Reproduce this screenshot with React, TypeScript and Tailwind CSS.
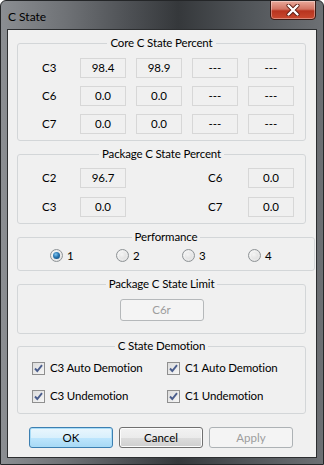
import React from "react";

const Field = ({ v }: { v: string }) => (
  <div className="w-[46px] h-[20px] border border-[#d7d7d7] bg-[#f0f0f0] flex items-center justify-center text-[11.5px] leading-none text-black">
    {v}
  </div>
);

const Label = ({ t }: { t: string }) => (
  <div className="h-[20px] flex items-center text-[11.5px] leading-none text-black">{t}</div>
);

const Group = ({
  title,
  className,
  children,
}: {
  title: string;
  className?: string;
  children: React.ReactNode;
}) => (
  <fieldset className={"w-[289px] border border-[#d3d6d8] rounded-[3px] " + (className ?? "")}>
    <legend className="mx-auto px-[3px] text-[11.5px] tracking-[-0.15px] leading-[16px] text-black">{title}</legend>
    {children}
  </fieldset>
);

const Radio = ({ checked, label }: { checked?: boolean; label: string }) => (
  <div className="w-[66px] flex items-center gap-[4px]">
    <div className="w-[13px] h-[13px] rounded-full border border-[#8e9396] bg-[radial-gradient(circle_at_40%_40%,#ffffff,#d8d8d8)] flex items-center justify-center">
      {checked ? (
        <div className="w-[7px] h-[7px] rounded-full bg-[radial-gradient(circle_at_40%_35%,#7fc4ee_0%,#2a77b2_45%,#0b3f6e_100%)]" />
      ) : (
        <div className="w-[7px] h-[7px] rounded-full bg-[radial-gradient(circle_at_40%_35%,#f4f4f4,#dcdcdc)]" />
      )}
    </div>
    <span className="text-[11.5px] leading-none text-black">{label}</span>
  </div>
);

const Check = ({ label }: { label: string }) => (
  <div className="h-[16px] flex items-center gap-[5px]">
    <div className="w-[13px] h-[13px] border border-[#8f8f8f] bg-[linear-gradient(135deg,#dcdcdc,#f6f6f6)] flex items-center justify-center">
      <svg width="11" height="11" viewBox="0 0 11 11">
        <path d="M2 5.5 L4.3 8 L9 2.2" fill="none" stroke="#4a5d8c" strokeWidth="1.9" />
      </svg>
    </div>
    <span className="text-[11.5px] tracking-[-0.15px] leading-none text-black">{label}</span>
  </div>
);

export default function App() {
  return (
    <div className="w-[324px] h-[465px] font-['Lato','Open_Sans',sans-serif] flex flex-col border border-[#242628] rounded-t-[6px] bg-[linear-gradient(90deg,#8b8e92_0%,#6f7276_20%,#4d5054_40%,#35383b_55%,#4f5357_75%,#6d7074_100%)] overflow-hidden">
      <div className="h-[29px] flex items-start pl-[7px] pr-[7px] shrink-0">
        <div className="mt-[8px] text-[12px] leading-[16px] text-black">C State</div>
        <div className="ml-auto w-[46px] h-[20px] -mt-px rounded-b-[4px] border border-[#3b1a14] bg-[linear-gradient(180deg,#e9a99b_0%,#d27463_45%,#b8341f_55%,#c9492f_100%)] flex items-center justify-center shadow-[inset_0_0_0_1px_rgba(255,255,255,0.35)]">
          <svg width="14" height="12" viewBox="0 0 14 12">
            <path d="M2.5 1.5 L11.5 10.5 M11.5 1.5 L2.5 10.5" stroke="#5a1a10" strokeWidth="4" strokeLinecap="round" />
            <path d="M2.5 1.5 L11.5 10.5 M11.5 1.5 L2.5 10.5" stroke="#ffffff" strokeWidth="2.4" strokeLinecap="round" />
          </svg>
        </div>
      </div>
      <div className="mx-[7px] w-[308px] h-[427px] bg-[#f0f0f0] shadow-[0_0_0_1px_#2c2e30] flex flex-col pl-[9px] pt-[5px] shrink-0">
        <Group title="Core C State Percent" className="pt-[7px] pb-[6px]">
          <div className="grid grid-cols-[28px_repeat(4,46px)] gap-x-[10px] gap-y-[8px] pl-[24px]">
            <Label t="C3" />
            <Field v="98.4" />
            <Field v="98.9" />
            <Field v="---" />
            <Field v="---" />
            <Label t="C6" />
            <Field v="0.0" />
            <Field v="0.0" />
            <Field v="---" />
            <Field v="---" />
            <Label t="C7" />
            <Field v="0.0" />
            <Field v="0.0" />
            <Field v="---" />
            <Field v="---" />
          </div>
        </Group>
        <Group title="Package C State Percent" className="mt-[5px] pt-[6px] pb-[6px]">
          <div className="grid grid-cols-[28px_46px_62px_30px_46px] gap-x-[10px] gap-y-[9px] pl-[24px]">
            <Label t="C2" />
            <Field v="96.7" />
            <div />
            <Label t="C6" />
            <Field v="0.0" />
            <Label t="C3" />
            <Field v="0.0" />
            <div />
            <Label t="C7" />
            <Field v="0.0" />
          </div>
        </Group>
        <Group title="Performance" className="mt-[5px] pt-[4px] pb-[8px]">
          <div className="flex pl-[32px] h-[13px] items-center">
            <Radio checked label="1" />
            <Radio label="2" />
            <Radio label="3" />
            <Radio label="4" />
          </div>
        </Group>
        <Group title="Package C State Limit" className="mt-[5px] pt-[7px] pb-[12px]">
          <div className="flex justify-center">
            <div className="w-[84px] h-[22px] border border-[#b5b8ba] rounded-[3px] bg-[#f4f4f4] flex items-center justify-center text-[11.5px] leading-none text-[#9d9d9d]">
              C6r
            </div>
          </div>
        </Group>
        <Group title="C State Demotion" className="mt-[4px] pt-[6px] pb-[9px]">
          <div className="grid grid-cols-[135px_auto] gap-y-[12px] pl-[14px]">
            <Check label="C3 Auto Demotion" />
            <Check label="C1 Auto Demotion" />
            <Check label="C3 Undemotion" />
            <Check label="C1 Undemotion" />
          </div>
        </Group>
        <div className="flex gap-[6px] pl-[12px] mt-[13px]">
          <div className="w-[84px] h-[21px] rounded-[3px] border border-[#3c7fb1] bg-[linear-gradient(180deg,#eaf6fd_0%,#d9f0fc_50%,#bee6fd_51%,#a7d9f5_100%)] shadow-[inset_0_0_0_1px_#a9dcf7] flex items-center justify-center text-[11.5px] leading-none text-black">
            OK
          </div>
          <div className="w-[84px] h-[21px] rounded-[3px] border border-[#707070] bg-[linear-gradient(180deg,#f2f2f2_0%,#ebebeb_50%,#dddddd_51%,#cfcfcf_100%)] shadow-[inset_0_0_0_1px_#fcfcfc] flex items-center justify-center text-[11.5px] leading-none text-black">
            Cancel
          </div>
          <div className="w-[84px] h-[21px] rounded-[3px] border border-[#adb2b5] bg-[#f4f4f4] flex items-center justify-center text-[11.5px] leading-none text-[#9d9d9d]">
            Apply
          </div>
        </div>
      </div>
    </div>
  );
}
